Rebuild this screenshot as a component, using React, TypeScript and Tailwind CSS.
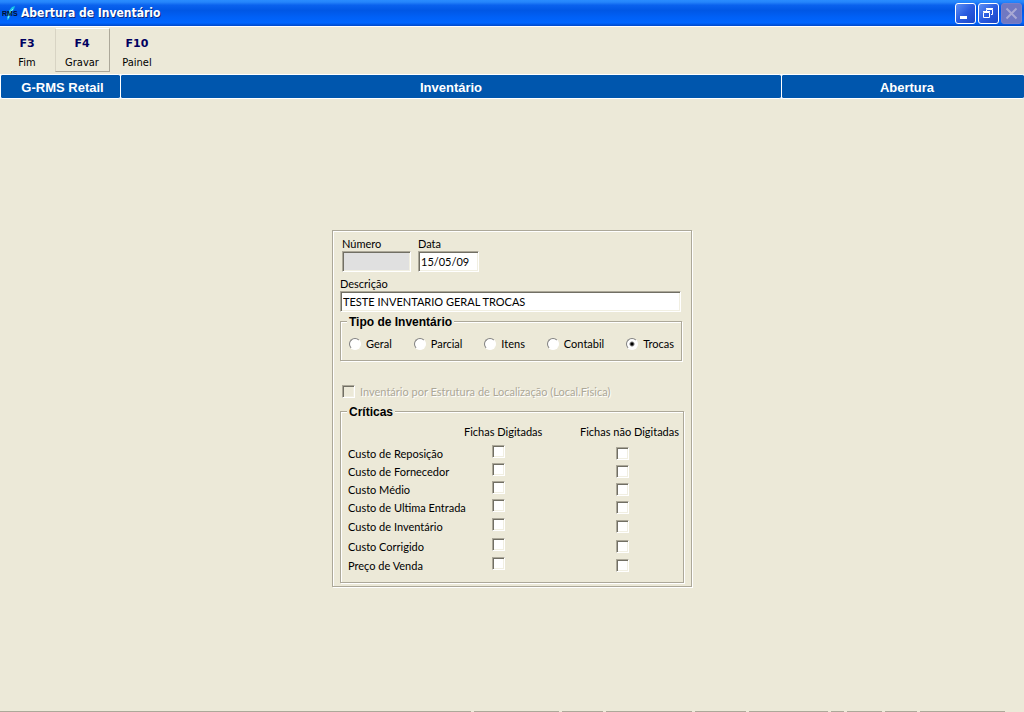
import { useState } from 'react';
import type { ReactNode } from 'react';

const SUNKEN =
  'border border-t-[#aca899] border-l-[#aca899] border-r-white border-b-white shadow-[inset_1px_1px_0_#716f64,inset_-1px_-1px_0_#f1efe2]';

const shortcuts = [
  { keyName: 'F3', label: 'Fim' },
  { keyName: 'F4', label: 'Gravar', raised: true },
  { keyName: 'F10', label: 'Painel' },
];

const inventoryTypes = ['Geral', 'Parcial', 'Itens', 'Contabil', 'Trocas'];

const checks = [
  { label: 'Custo de Reposição', height: 'h-[18px]' },
  { label: 'Custo de Fornecedor', height: 'h-[18px]' },
  { label: 'Custo Médio', height: 'h-[18px]' },
  { label: 'Custo de Ultima Entrada', height: 'h-[18px]' },
  { label: 'Custo de Inventário', height: 'h-5' },
  { label: 'Custo Corrigido', height: 'h-5' },
  { label: 'Preço de Venda', height: 'h-[18px]' },
];

const statusPanels = ['w-[471px]', 'w-[85px]', 'w-[41px]', 'w-[86px]', 'w-[51px]', 'w-[79px]', 'w-[13px]', 'w-[35px]', 'w-[32px]', 'w-[85px]'];

function AppIcon() {
  return (
    <svg width="17" height="17" viewBox="0 0 17 17" aria-hidden="true">
      <path d="M5 15 6 7l4-5 3-1-1 3-3 3 2 1-3 2-1 4z" fill="#19c5e8" />
      <path d="M7 9l4-5M6 13l2-4" stroke="#8ff0ff" fill="none" />
      <text x="0" y="11" fontSize="7" fontWeight="bold" fill="#001030" fontFamily="Liberation Sans, sans-serif">
        RMS
      </text>
    </svg>
  );
}

function TitleBar() {
  const button = 'flex size-[21px] items-center justify-center rounded-[3px] border';
  const active = 'border-white bg-linear-to-br from-[#5f8ff5] via-[#2a5be0] to-[#1a46c8]';

  return (
    <header className="flex h-[26px] items-center bg-[linear-gradient(180deg,#2a8cff_0%,#2585fb_8%,#0a62ee_20%,#0057e5_40%,#0060f6_65%,#0066ff_88%,#0048c8_100%)] pr-[2px] pl-[2px]">
      <AppIcon />
      <h1 className="ml-[2px] font-['DejaVu_Sans_Condensed','DejaVu_Sans',sans-serif] text-[12px] font-bold text-white [text-shadow:1px_1px_0_#0a2a80]">
        Abertura de Inventário
      </h1>
      <div className="ml-auto flex gap-[2px]">
        <button type="button" aria-label="Minimizar" className={`${button} ${active}`}>
          <svg width="19" height="19" viewBox="0 0 19 19">
            <path d="M4 12h7v3H4z" fill="#fff" />
          </svg>
        </button>
        <button type="button" aria-label="Restaurar" className={`${button} ${active}`}>
          <svg width="19" height="19" viewBox="0 0 19 19" fill="none" stroke="#fff">
            <path d="M7.500 7V5.500h6v5H12M7 4.500h7" />
            <path d="M4.500 8.500h6v5h-6zM4 7.500h7" />
          </svg>
        </button>
        <button type="button" aria-label="Fechar" disabled className={`${button} border-[#7b7fc8] bg-[#7078c2]`}>
          <svg width="19" height="19" viewBox="0 0 19 19" stroke="#a9a9d4" strokeWidth="2">
            <path d="M4.500 4.500l10 10M14.500 4.500l-10 10" />
          </svg>
        </button>
      </div>
    </header>
  );
}

function Toolbar() {
  return (
    <nav className="flex h-12 border-t border-white pt-[1px] font-['DejaVu_Sans_Condensed','DejaVu_Sans',sans-serif] text-[11px]">
      {shortcuts.map(({ keyName, label, raised }) => (
        <button
          key={keyName}
          type="button"
          className={`flex h-11 w-[55px] flex-col items-center border pt-[7px] pr-px ${
            raised ? 'border-t-white border-r-[#aca899] border-b-[#aca899] border-l-[#d8d4c4]' : 'border-transparent'
          }`}
        >
          <b className="font-['DejaVu_Sans',sans-serif] leading-[15px] text-[#000060]">{keyName}</b>
          <span className="mt-1 leading-[15px]">{label}</span>
        </button>
      ))}
    </nav>
  );
}

function Banner() {
  const cell = 'flex items-center justify-center rounded-[2px] border-y border-l border-white bg-[#0056ad] pt-[2px]';

  return (
    <div className="flex h-[25px] bg-white font-['Liberation_Sans',Arial,sans-serif] text-[13px] font-bold text-white">
      <div className={`${cell} w-[120px] pl-1`}>G-RMS Retail</div>
      <div className={`${cell} flex-1`}>Inventário</div>
      <div className={`${cell} w-[243px] pl-2`}>Abertura</div>
    </div>
  );
}

function GroupBox({ title, className, children }: { title: string; className: string; children: ReactNode }) {
  return (
    <fieldset className={`border border-[#aca899] shadow-[1px_1px_0_#fff,inset_1px_1px_0_#fff] ${className}`}>
      <legend className="ml-[6px] bg-[#ece9d8] px-[2px] font-['Liberation_Sans',Arial,sans-serif] text-[12px] leading-[14px] font-bold">
        {title}
      </legend>
      {children}
    </fieldset>
  );
}

function CheckBox({ id, label, disabled }: { id: string; label?: string; disabled?: boolean }) {
  return (
    <input
      id={id}
      type="checkbox"
      aria-label={label}
      disabled={disabled}
      className={`block size-[13px] shrink-0 appearance-none checked:bg-[#404040] ${disabled ? 'bg-[#ece9d8]' : 'bg-white'} ${SUNKEN}`}
    />
  );
}

export default function App() {
  const [date, setDate] = useState('15/05/09');
  const [description, setDescription] = useState('TESTE INVENTARIO GERAL TROCAS');
  const [type, setType] = useState('Trocas');

  return (
    <div className="flex min-h-screen flex-col bg-[#ece9d8] text-black">
      <TitleBar />
      <Toolbar />
      <Banner />

      <main className="flex flex-1 items-center justify-center pt-[6px] font-[Lato,'Liberation_Sans',sans-serif] text-[11px]">
        <form className="w-[360px] border border-[#aca899] px-[7px] pt-[6px] pb-[3px] shadow-[1px_1px_0_#fff,inset_1px_1px_0_#fff]">
          <div className="flex gap-[7px] pl-[2px]">
            <div>
              <label htmlFor="numero" className="block leading-[14px]">Número</label>
              <input id="numero" disabled className={`block h-[21px] w-[69px] bg-[#e0e0e0] px-[2px] ${SUNKEN}`} />
            </div>
            <div>
              <label htmlFor="data" className="block leading-[14px]">Data</label>
              <input
                id="data"
                value={date}
                onChange={(e) => setDate(e.target.value)}
                className={`block h-[21px] w-[61px] bg-white px-[2px] outline-none ${SUNKEN}`}
              />
            </div>
          </div>

          <label htmlFor="descricao" className="mt-[5px] block leading-[14px]">Descrição</label>
          <input
            id="descricao"
            value={description}
            onChange={(e) => setDescription(e.target.value)}
            className={`block h-[21px] w-[341px] bg-white px-[2px] outline-none ${SUNKEN}`}
          />

          <GroupBox title="Tipo de Inventário" className="mt-[3px] mr-[2px] h-[46px]">
            <div className="flex justify-between pt-[8px] pr-[7px] pl-[8px]">
              {inventoryTypes.map((name) => (
                <label key={name} className="flex items-center gap-[5px] leading-[14px]">
                  <input
                    type="radio"
                    name="tipo"
                    checked={type === name}
                    onChange={() => setType(name)}
                    className="size-3 appearance-none rounded-full border border-t-[#808080] border-r-white border-b-white border-l-[#808080] bg-white checked:bg-[radial-gradient(circle,#000_1px,#fff_3px)]"
                  />
                  {name}
                </label>
              ))}
            </div>
          </GroupBox>

          <div className="mt-6 flex items-center gap-[5px] pl-[2px]">
            <CheckBox id="estrutura" disabled />
            <label htmlFor="estrutura" className="leading-[14px] text-[#aca899] [text-shadow:1px_1px_0_#fff]">
              Inventário por Estrutura de Localização (Local.Fisica)
            </label>
          </div>

          <GroupBox title="Críticas" className="mt-[6px] h-[178px]">
            <table className="ml-[7px] w-[335px] table-fixed border-collapse whitespace-nowrap">
              <thead>
                <tr className="h-[26px] leading-[14px]">
                  <td className="w-[116px]" />
                  <th scope="col" className="w-[116px] p-0 text-left align-top font-normal">
                    <div className="pt-[6px]">Fichas Digitadas</div>
                  </th>
                  <th scope="col" className="w-[103px] p-0 text-left align-top font-normal">
                    <div className="pt-[6px]">Fichas não Digitadas</div>
                  </th>
                </tr>
              </thead>
              <tbody>
                {checks.map(({ label, height }, i) => (
                  <tr key={label} className={height}>
                    <th scope="row" className="p-0 text-left leading-[14px] font-normal">{label}</th>
                    <td className="p-0 pb-1 pl-7">
                      <CheckBox id={`digitada-${i}`} label={`${label}: Fichas Digitadas`} />
                    </td>
                    <td className="p-0 pl-9">
                      <CheckBox id={`nao-digitada-${i}`} label={`${label}: Fichas não Digitadas`} />
                    </td>
                  </tr>
                ))}
              </tbody>
            </table>
          </GroupBox>
        </form>
      </main>

      <footer className="flex h-px gap-[3px]">
        {statusPanels.map((width, i) => (
          <span key={i} className={`h-px bg-[#aca899] ${width}`} />
        ))}
      </footer>
    </div>
  );
}
